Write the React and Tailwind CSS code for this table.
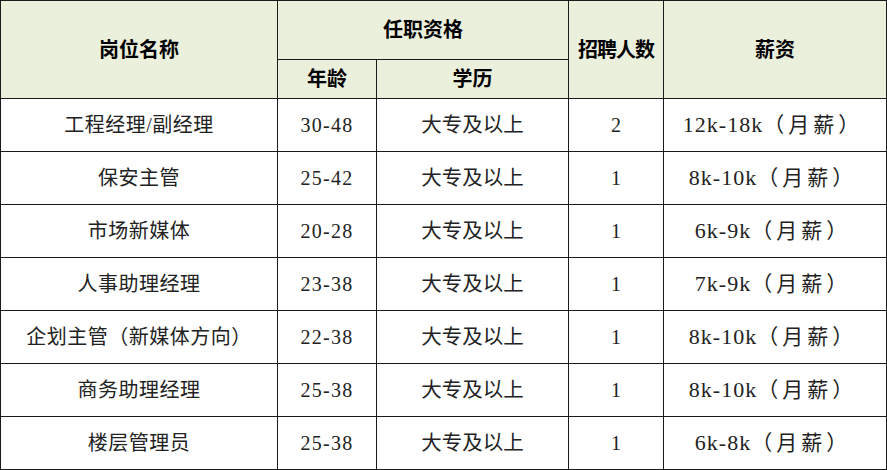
import React from 'react';

const rows = [
  { name: '工程经理/副经理', age: '30-48', edu: '大专及以上', count: '2', salary: '12k-18k' },
  { name: '保安主管', age: '25-42', edu: '大专及以上', count: '1', salary: '8k-10k' },
  { name: '市场新媒体', age: '20-28', edu: '大专及以上', count: '1', salary: '6k-9k' },
  { name: '人事助理经理', age: '23-38', edu: '大专及以上', count: '1', salary: '7k-9k' },
  { name: '企划主管（新媒体方向）', age: '22-38', edu: '大专及以上', count: '1', salary: '8k-10k' },
  { name: '商务助理经理', age: '25-38', edu: '大专及以上', count: '1', salary: '8k-10k' },
  { name: '楼层管理员', age: '25-38', edu: '大专及以上', count: '1', salary: '6k-8k' },
];

const font = { fontFamily: '"Liberation Serif", "Noto Sans CJK SC", serif' };
const cell = 'border border-[#1a1a1a] text-center';

const App = () => {
  return (
    <div className="w-[887px] h-[470px] bg-white overflow-hidden" style={font}>
      <table className="border-collapse table-fixed w-[886px] text-[20px] text-[#222]">
        <colgroup>
          <col className="w-[277px]" />
          <col className="w-[99px]" />
          <col className="w-[192px]" />
          <col className="w-[95px]" />
          <col className="w-[223px]" />
        </colgroup>
        <thead className="bg-[#ebf0dd] text-[20px] text-black">
          <tr className="h-[59px]">
            <th rowSpan={2} className={`${cell} font-bold`}>岗位名称</th>
            <th colSpan={2} className={`${cell} font-bold`}>任职资格</th>
            <th rowSpan={2} className={`${cell} font-bold whitespace-nowrap px-0 tracking-[-1px]`}>招聘人数</th>
            <th rowSpan={2} className={`${cell} font-bold`}>薪资</th>
          </tr>
          <tr className="h-[39px]">
            <th className={`${cell} font-bold`}>年龄</th>
            <th className={`${cell} font-bold`}>学历</th>
          </tr>
        </thead>
        <tbody>
          {rows.map((row) => (
            <tr key={row.name} className="h-[53px]">
              <td className={`${cell} whitespace-nowrap tracking-[0.5px]`}>{row.name}</td>
              <td className={`${cell} tracking-[1.3px]`}>{row.age}</td>
              <td className={`${cell} text-[20.5px]`}>{row.edu}</td>
              <td className={cell}>{row.count}</td>
              <td className={`${cell} whitespace-nowrap text-[21px] pr-[4px]`}>
                <span className="text-[22px] tracking-[1px]">{row.salary}</span>
                <span className="tracking-[4px]">（月薪）</span>
              </td>
            </tr>
          ))}
        </tbody>
      </table>
    </div>
  );
};

export default App;
